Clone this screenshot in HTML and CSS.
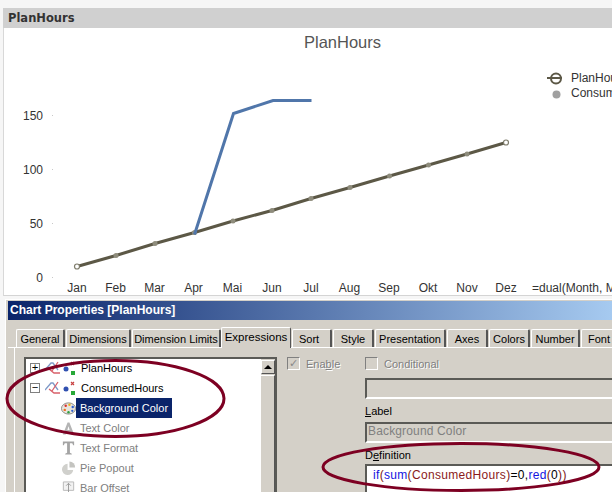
FILE: index.html
```html
<!DOCTYPE html>
<html lang="en">
<head>
<meta charset="utf-8">
<title>PlanHours</title>
<link rel="stylesheet" href="styles.css">
</head>
<body>
<div class="shot">
  <section class="window">
    <header class="caption">PlanHours</header>
    <svg class="chart" width="608" height="267" viewBox="4 28 608 267">
      <text class="c-title" x="342.500" y="48" text-anchor="middle">PlanHours</text>
      <g class="ticks">
        <rect x="52" y="115" width="1" height="1"/><rect x="52" y="169" width="1" height="1"/><rect x="52" y="223" width="1" height="1"/><rect x="52" y="277" width="1" height="1"/>
      </g>
      <g class="c-label" text-anchor="end">
        <text x="43" y="120">150</text><text x="43" y="174">100</text><text x="43" y="228">50</text><text x="43" y="282">0</text>
      </g>
      <g class="c-label" text-anchor="middle">
        <text x="77" y="292">Jan</text><text x="115.500" y="292">Feb</text><text x="154.500" y="292">Mar</text><text x="193.500" y="292">Apr</text><text x="232.500" y="292">Mai</text><text x="272" y="292">Jun</text><text x="311" y="292">Jul</text><text x="349.500" y="292">Aug</text><text x="389" y="292">Sep</text><text x="428" y="292">Okt</text><text x="467" y="292">Nov</text><text x="506" y="292">Dez</text>
      </g>
      <text class="c-label" x="532" y="292">=dual(Month, Month)</text>
      <polyline class="l-plan" points="77,266.500 116,255.500 155,243.500 194.500,232.500 233,221 272,210.500 311,198.500 350,187.500 389.500,176 428.500,165 467,154 506,142.500"/>
      <g class="dots">
        <circle cx="116" cy="255.500" r="2.500"/><circle cx="155" cy="243.500" r="2.500"/><circle cx="194.500" cy="232.500" r="2.500"/><circle cx="233" cy="221" r="2.500"/><circle cx="272" cy="210.500" r="2.500"/><circle cx="311" cy="198.500" r="2.500"/><circle cx="350" cy="187.500" r="2.500"/><circle cx="389.500" cy="176" r="2.500"/><circle cx="428.500" cy="165" r="2.500"/><circle cx="467" cy="154" r="2.500"/>
      </g>
      <circle class="end-dot" cx="77" cy="266.500" r="2.500"/>
      <circle class="end-dot" cx="506" cy="142.500" r="2.500"/>
      <polyline class="l-cons" points="194.500,234.500 233.500,113.500 273,100.500 311.500,100.500"/>
      <line class="lg-line" x1="547" y1="78" x2="562" y2="78"/>
      <circle class="lg-ring" cx="556" cy="78.500" r="5"/>
      <circle class="lg-dot" cx="556.500" cy="94.500" r="4"/>
      <text class="c-label" x="571" y="82">PlanHours</text>
      <text class="c-label" x="571" y="97">ConsumedHours</text>
    </svg>
  </section>

  <section class="dialog">
    <header class="titlebar">Chart Properties [PlanHours]</header>
    <nav class="tabs">
      <span class="tab t1">General</span>
      <span class="tab t2">Dimensions</span>
      <span class="tab t3">Dimension Limits</span>
      <span class="tab active">Expressions</span>
      <span class="tab t5">Sort</span>
      <span class="tab t6">Style</span>
      <span class="tab t7">Presentation</span>
      <span class="tab t8">Axes</span>
      <span class="tab t9">Colors</span>
      <span class="tab t10">Number</span>
      <span class="tab t11">Font</span>
    </nav>
    <div class="panel">
      <div class="tree">
        <ul class="rows">
          <li class="row">
            <span class="exp">+</span>
            <svg class="ic-line" width="16" height="14" viewBox="0 0 16 14"><path d="M0 9 6 2h2l5 7" fill="none" stroke="#7f9ac8" stroke-width="1.300"/><path d="M7 10 13 1M4 8l5 4h6" fill="none" stroke="#d8606a" stroke-width="1.300"/></svg>
            <svg class="ic-dots" width="13" height="14" viewBox="0 0 13 14"><circle cx="3" cy="8" r="2.500" fill="#3050b0"/><path d="M8 1l3 3M11 1 8 4" stroke="#c84040" stroke-width="1.200"/><rect x="8" y="10" width="4" height="4" fill="#28a838"/></svg>
            <span class="name">PlanHours</span>
          </li>
          <li class="row">
            <span class="exp">&minus;</span>
            <svg class="ic-line" width="16" height="14" viewBox="0 0 16 14"><path d="M0 9 6 2h2l5 7" fill="none" stroke="#7f9ac8" stroke-width="1.300"/><path d="M7 10 13 1M4 8l5 4h6" fill="none" stroke="#d8606a" stroke-width="1.300"/></svg>
            <svg class="ic-dots" width="13" height="14" viewBox="0 0 13 14"><circle cx="3" cy="8" r="2.500" fill="#3050b0"/><path d="M8 1l3 3M11 1 8 4" stroke="#c84040" stroke-width="1.200"/><rect x="8" y="10" width="4" height="4" fill="#28a838"/></svg>
            <span class="name">ConsumedHours</span>
          </li>
          <li class="row child">
            <svg class="ic-child" width="15" height="16" viewBox="0 0 16 16"><ellipse cx="8" cy="8.500" rx="7.500" ry="6" fill="#e8e4dc" stroke="#8a8a84"/><circle cx="5" cy="5.500" r="1.300" fill="#d83030"/><circle cx="9" cy="4.500" r="1.300" fill="#e8b020"/><circle cx="12.500" cy="7" r="1.300" fill="#3060d0"/><circle cx="4" cy="10" r="1.300" fill="#f07020"/><circle cx="8" cy="12.500" r="1.300" fill="#30a040"/><circle cx="12" cy="11" r="1.200" fill="#3060d0"/></svg>
            <span class="name selected">Background Color</span>
          </li>
          <li class="row child off">
            <svg class="ic-child" width="15" height="16" viewBox="0 0 16 16"><path d="M2 15 7 2h2l5 13h-3l-1-3H6l-1 3zM6.800 10h2.400L8 6z" fill="#b4b4b4"/></svg>
            <span class="name">Text Color</span>
          </li>
          <li class="row child off">
            <svg class="ic-child" width="15" height="16" viewBox="0 0 16 16"><path d="M2 1h12v4h-1l-1-2H9.500v10l2 1v1h-7v-1l2-1V3H4L3 5H2z" fill="#a4a4a4"/></svg>
            <span class="name">Text Format</span>
          </li>
          <li class="row child off">
            <svg class="ic-child" width="15" height="16" viewBox="0 0 16 16"><path d="M7 3.500a6 6 0 1 0 6 6.500H7z" fill="#d0d0cc"/><path d="M9 1a6 6 0 0 1 6 6.500H9z" fill="#c4c4c0"/></svg>
            <span class="name">Pie Popout</span>
          </li>
          <li class="row child off">
            <svg class="ic-child" width="15" height="16" viewBox="0 0 16 16"><path d="M2.500 1.500h11v9h-11z" fill="#f2f2f2" stroke="#b8b8b8"/><path d="M8 3v13M5.500 5.500 8 3l2.500 2.500" fill="none" stroke="#989898"/></svg>
            <span class="name">Bar Offset</span>
          </li>
        </ul>
        <div class="scroll"><span class="arrow"></span><span class="thumb"></span></div>
      </div>
      <div class="enable"><span class="check on">&#10003;</span><span class="dis">Ena<u>b</u>le</span></div>
      <div class="right">
        <div class="cond"><span class="check"></span><span class="dis">Conditional</span></div>
        <div class="field blank"></div>
        <div class="lab"><u>L</u>abel</div>
        <div class="field value">Background Color</div>
        <div class="lab def">D<u>e</u>finition</div>
        <div class="code"><i class="kw">if</i><i class="br">(</i><i class="kw">sum</i><i class="br">(</i><i class="fd">ConsumedHours</i><i class="br">)</i>=0,<i class="kw">red</i><i class="br">(</i>0<i class="br">))</i></div>
      </div>
    </div>
  </section>

  <svg class="marks" width="612" height="492" viewBox="0 0 612 492">
    <ellipse cx="115.500" cy="398.500" rx="108.500" ry="38"/>
    <ellipse cx="461" cy="467" rx="138" ry="23.500"/>
  </svg>
</div>
</body>
</html>
```

FILE: styles.css
```css
* { box-sizing: border-box; margin: 0; padding: 0; }
html, body { width: 612px; height: 492px; overflow: hidden; background: #f6f6f6; }
body { font-family: "Liberation Sans", Arial, sans-serif; }
.shot { position: relative; width: 612px; height: 492px; overflow: hidden; padding-top: 8px; display: flex; flex-direction: column; }

.window { margin-left: 3px; border-left: 1px solid #d8d8d8; border-bottom: 1px solid #d4d4d4; height: 288px; background: #fff; flex: none; }
.caption { height: 20px; background: #d0d0d0; color: #333; font: bold 11.500px/20px "DejaVu Sans", sans-serif; padding-left: 5px; margin-left: -1px; }
.chart { display: block; }
.chart text { font-family: "Liberation Sans", Arial, sans-serif; }
.chart .c-title { font-size: 16.500px; fill: #555; }
.c-label { font-size: 12px; fill: #333; }
.ticks { fill: #c8c8c8; }
.l-plan { fill: none; stroke: #5c5846; stroke-width: 3; }
.l-cons { fill: none; stroke: #5076aa; stroke-width: 3; }
.dots { fill: #8e8c7c; }
.end-dot { fill: #fff; stroke: #7e7c6c; stroke-width: 1.200; }
.lg-line { stroke: #5c5846; stroke-width: 2; }
.lg-ring { fill: none; stroke: #5c5846; stroke-width: 2; }
.lg-dot { fill: #a0a0a0; }

.dialog { margin: 3px 0 0 5px; flex: 1; min-height: 0; background: #d4d0c8; border-top: 1px solid #fff; border-left: 1px solid #fff; padding: 1px 0 0 2px; font-size: 11px; color: #000; display: flex; flex-direction: column; }
.titlebar { height: 19px; flex: none; background: linear-gradient(90deg, #0a246a, #a6caf0); color: #fff; font: bold 12px/19px "Liberation Sans", sans-serif; padding-left: 2px; }
.tabs { display: flex; align-items: flex-end; height: 28px; flex: none; padding-left: 8px; gap: 1px; border-bottom: 1px solid #fff; }
.tab { height: 18px; padding-top: 2px; text-align: center; border-top: 1px solid #fff; border-left: 1px solid #fff; border-right: 2px solid #555; border-radius: 2px 2px 0 0; line-height: 15px; flex: none; white-space: nowrap; }
.t1 { width: 49px; } .t2 { width: 65px; } .t3 { width: 89px; }
.active { width: 70px; height: 21px; padding-top: 2px; margin-left: -1px; margin-bottom: -1px; background: #d4d0c8; position: relative; border-right: 1px solid #555; font-size: 11.500px; }
.t5 { width: 40px; text-align: left; padding-left: 6px; } .t6 { width: 41px; } .t7 { width: 71px; } .t8 { width: 41px; } .t9 { width: 41px; } .t10 { width: 49px; } .t11 { width: 50px; text-align: left; padding-left: 6px; }

.panel { flex: 1; min-height: 0; margin-left: 6px; border-left: 1px solid #fff; padding: 9px 0 0 9px; display: flex; align-items: flex-start; overflow: hidden; }
.tree { width: 253px; height: 160px; flex: none; background: #fff; border: 2px solid #5a5a56; border-bottom: 0; display: flex; }
.rows { list-style: none; flex: 1; margin-top: -1px; }
.row { height: 20px; display: flex; align-items: center; padding-left: 4px; white-space: nowrap; }
.exp { width: 10px; height: 10px; flex: none; border: 1px solid #808080; font: 11px/8px "Liberation Mono", monospace; text-align: center; margin-right: 5px; }
.ic-line { flex: none; margin-right: 2px; }
.ic-dots { flex: none; margin-right: 5px; }
.name { line-height: 20px; }
.child { padding-left: 35px; }
.ic-child { flex: none; }
.selected { background: #0a246a; color: #fff; padding: 0 0 0 4px; width: 96px; }
.off .name { color: #808080; padding-left: 4px; }
.scroll { width: 15px; flex: none; background: #d4d0c8; border-left: 1px solid #fff; padding-top: 1px; }
.arrow { display: block; height: 14px; background: #d4d0c8; border: 1px solid; border-color: #fff #555 #555 #fff; position: relative; }
.arrow::after { content: ""; position: absolute; left: 2px; top: 4px; border: 4px solid transparent; border-top: 0; border-bottom: 4px solid #000; }
.thumb { display: block; height: 160px; margin-top: 1px; border-top: 1px solid #fff; border-right: 1px solid #555; }

.enable { display: flex; align-items: center; gap: 6px; margin-left: 10px; width: 78px; flex: none; height: 13px; }
.check { width: 13px; height: 13px; flex: none; border: 1px solid; border-color: #808080 #fff #fff #808080; font: 11px/11px "DejaVu Sans", sans-serif; color: #888; text-align: center; display: block; }
.dis { color: #808080; text-shadow: 1px 1px 0 #fff; }
.right { flex: 1; min-width: 0; margin-right: -20px; display: flex; flex-direction: column; }
.cond { display: flex; align-items: center; gap: 6px; height: 13px; }
.field { border: 2px solid #5a5a56; border-right: 0; border-bottom-color: #fff; height: 21px; }
.blank { margin-top: 8px; }
.lab { height: 23px; line-height: 15px; padding-top: 5px; }
.value { color: #808080; font-size: 12px; padding-left: 1px; line-height: 15px; letter-spacing: .15px; }
.def { height: 21px; padding-top: 5px; }
.code { background: #fff; border: 2px solid #5a5a56; border-right: 0; border-bottom: 0; height: 40px; padding: 1px 0 0 6px; font-size: 12px; line-height: 16px; letter-spacing: .32px; }
.code i { font-style: normal; }
.kw { color: #1414e0; }
.br { color: #7a1414; }
.fd { color: #8b1a1a; }

.marks { position: absolute; left: 0; top: 0; pointer-events: none; }
.marks ellipse { fill: none; stroke: #7d0022; stroke-width: 3; }
```
